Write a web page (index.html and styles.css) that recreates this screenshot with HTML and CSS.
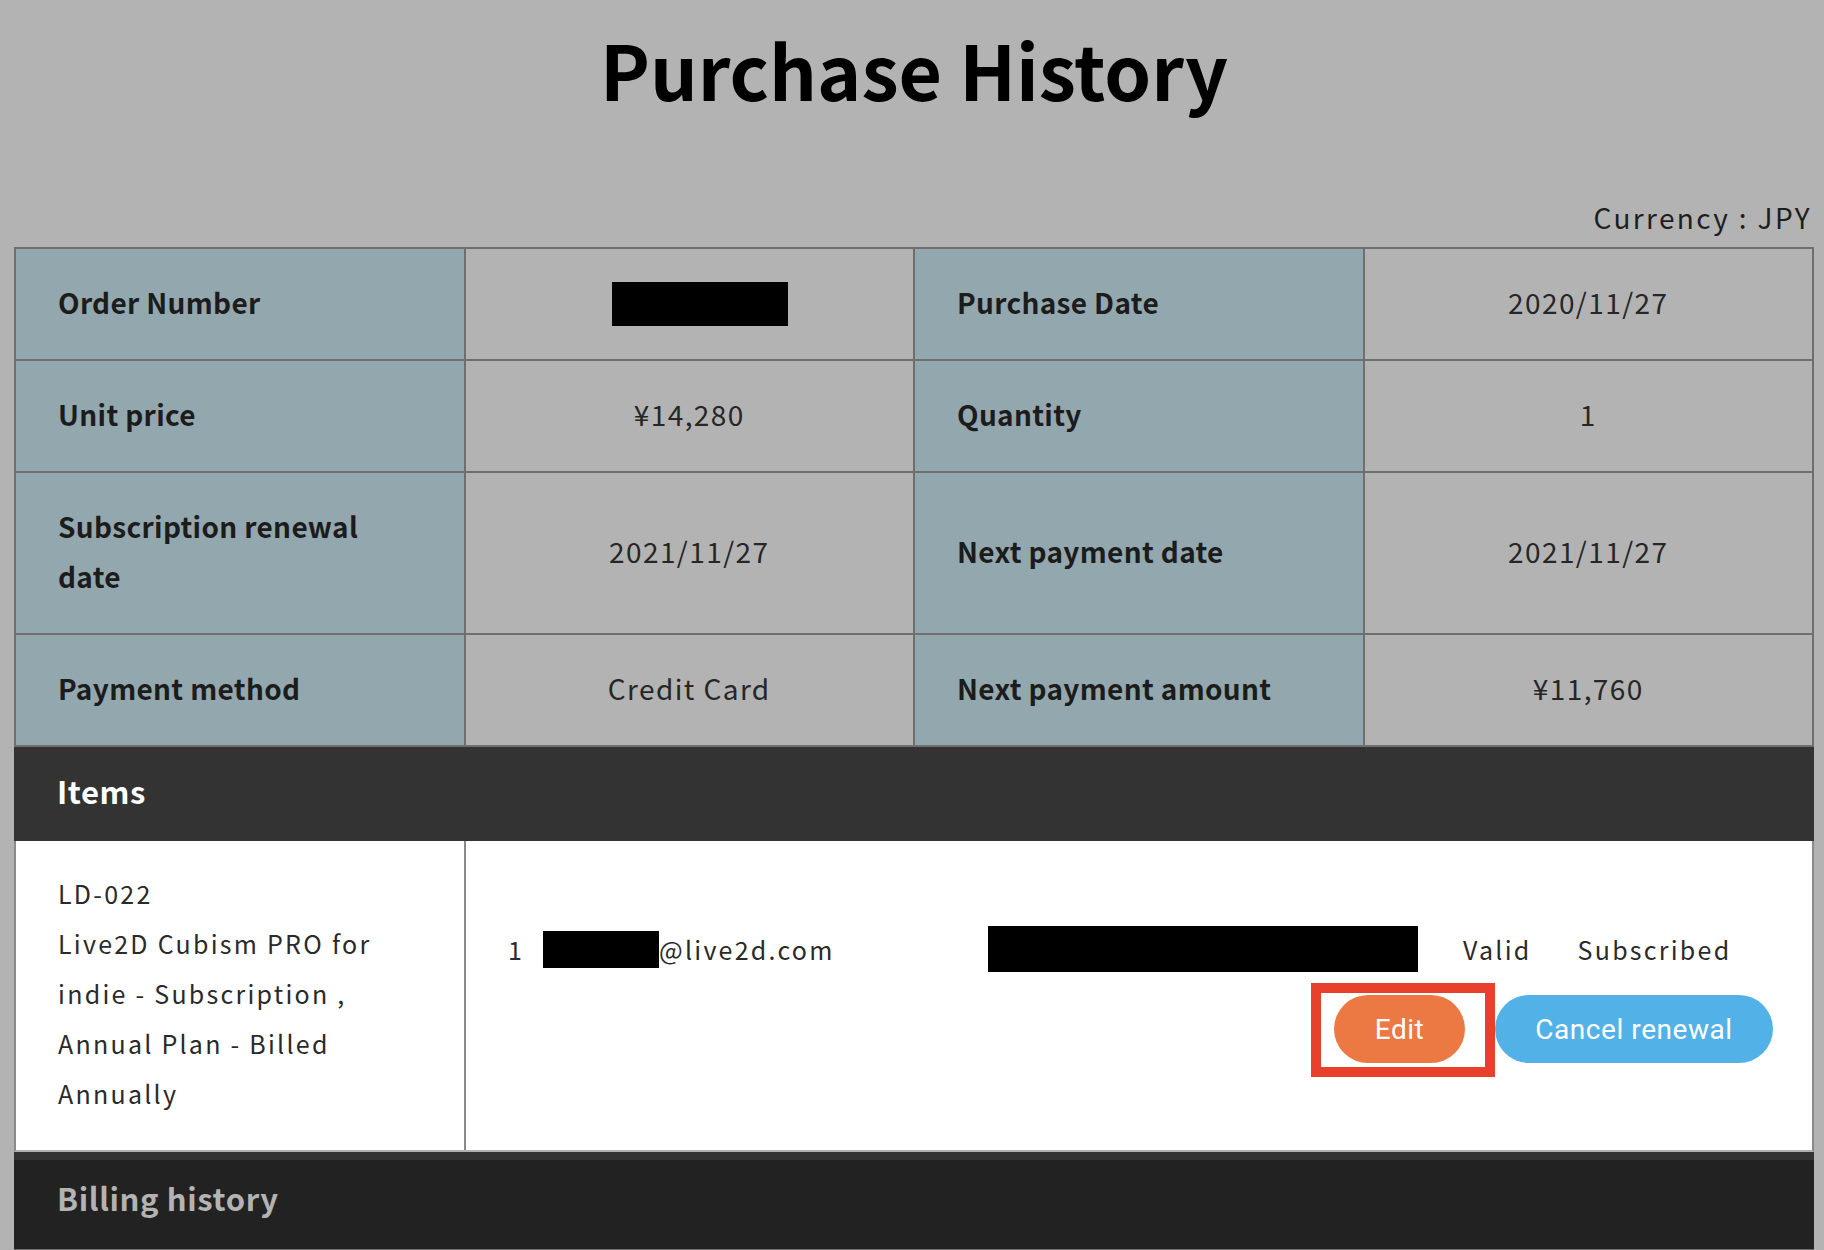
FILE: index.html
```html
<!DOCTYPE html>
<html lang="en">
<head>
<meta charset="utf-8">
<title>Purchase History</title>
<link rel="stylesheet" href="styles.css">
</head>
<body>
<main class="page">
  <h1 class="title">Purchase History</h1>
  <p class="currency">Currency : JPY</p>

  <div class="summary">
    <div class="cell label">Order Number</div>
    <div class="cell value"><span class="redact redact-order"></span></div>
    <div class="cell label">Purchase Date</div>
    <div class="cell value">2020/11/27</div>

    <div class="cell label">Unit price</div>
    <div class="cell value">¥14,280</div>
    <div class="cell label">Quantity</div>
    <div class="cell value">1</div>

    <div class="cell label">Subscription renewal date</div>
    <div class="cell value">2021/11/27</div>
    <div class="cell label">Next payment date</div>
    <div class="cell value">2021/11/27</div>

    <div class="cell label">Payment method</div>
    <div class="cell value">Credit Card</div>
    <div class="cell label">Next payment amount</div>
    <div class="cell value">¥11,760</div>
  </div>

  <section class="items">
    <h2 class="items-head">Items</h2>
    <div class="items-row">
      <div class="items-name">LD-022<br>Live2D Cubism PRO for indie - Subscription , Annual Plan - Billed Annually</div>
      <div class="items-detail">
        <div class="license">
          <span class="lic-no">1</span>
          <span class="lic-mail"><span class="redact redact-mail"></span>@live2d.com</span>
          <span class="redact redact-key"></span>
          <span class="lic-valid">Valid</span>
          <span class="lic-status">Subscribed</span>
        </div>
        <div class="actions">
          <span class="edit-wrap">
            <button class="btn btn-edit" type="button">Edit</button>
            <span class="highlight"></span>
          </span>
          <button class="btn btn-cancel" type="button">Cancel renewal</button>
        </div>
      </div>
    </div>
  </section>
  <div class="strip"></div>
  <h2 class="billing">Billing history</h2>
</main>
</body>
</html>
```
FILE: styles.css
```css
html, body {
  margin: 0;
  padding: 0;
  background: #b3b3b3;
}

body {
  font-family: "Noto Sans CJK JP", "Noto Sans", sans-serif;
  color: #1e1e1e;
  height: 1250px;
  overflow: hidden;
}

.page {
  padding: 0 10px 0 14px;
}

.title {
  margin: 0;
  padding-top: 30px;
  font-size: 75px;
  line-height: 78px;
  font-weight: 700;
  text-align: center;
  color: #000;
  letter-spacing: 0;
}

.currency {
  margin: 95px 2px 0 0;
  font-size: 28px;
  line-height: 28px;
  text-align: right;
  letter-spacing: 0.085em;
  color: #1e1e1e;
}

.summary {
  margin-top: 16px;
  display: grid;
  grid-template-columns: repeat(4, 1fr);
  gap: 2px;
  padding: 2px;
  background: #6f6f6f;
}

.cell {
  padding: 28px 40px 32px 42px;
  font-size: 28px;
  line-height: 50px;
  letter-spacing: 0.05em;
  display: flex;
  align-items: center;
}

.label {
  background: #93a7ae;
  font-weight: 700;
  color: #1c1c1c;
  letter-spacing: 0.012em;
}

.value {
  background: #b3b3b3;
  justify-content: center;
  padding-left: 30px;
  padding-right: 30px;
  color: #262626;
}

.redact {
  display: inline-block;
  background: #000;
}

.redact-order {
  width: 176px;
  height: 44px;
  margin-left: 22px;
  margin-top: 4px;
}

.items {
  background: #fff;
}

.items-head {
  margin: 0;
  background: #333;
  color: #fff;
  font-size: 31px;
  line-height: 88px;
  padding-bottom: 6px;
  font-weight: 700;
  padding-left: 43px;
  letter-spacing: 0.02em;
}

.items-row {
  display: grid;
  grid-template-columns: 450px 1fr;
  border-left: 2px solid #8a8a8a;
  border-right: 2px solid #8a8a8a;
  border-bottom: 2px solid #b0b0b0;
  min-height: 309px;
}

.items-name {
  border-right: 2px solid #8a8a8a;
  padding: 27px 38px 20px 42px;
  font-size: 25px;
  line-height: 50px;
  letter-spacing: 0.09em;
  color: #2a2a2a;
}

.items-detail {
  display: flex;
  flex-direction: column;
  justify-content: center;
  padding: 0 39px 0 42px;
}

.license {
  display: flex;
  align-items: center;
  font-size: 25px;
  letter-spacing: 0.09em;
  color: #2a2a2a;
  height: 46px;
  margin-top: -2px;
}

.lic-no {
  width: 35px;
}

.lic-mail {
  display: flex;
  align-items: center;
  width: 445px;
}

.redact-mail {
  width: 116px;
  height: 37px;
}

.redact-key {
  width: 430px;
  height: 46px;
}

.lic-valid {
  margin-left: 45px;
}

.lic-status {
  margin-left: 46px;
}

.actions {
  display: flex;
  justify-content: flex-end;
  gap: 30px;
  margin-top: 23px;
}

.edit-wrap {
  position: relative;
  display: inline-flex;
}

.btn {
  font-family: Roboto, "Noto Sans", sans-serif;
  font-size: 28px;
  color: #fff;
  border: 0;
  border-radius: 34px;
  height: 68px;
  padding: 0;
  letter-spacing: 0.02em;
}

.btn-edit {
  background: #ec7843;
  width: 131px;
}

.btn-cancel {
  background: #52b2e8;
  width: 278px;
}

.highlight {
  position: absolute;
  left: -23px;
  right: -30px;
  top: -12px;
  bottom: -14px;
  border: 10px solid #e8402a;
}

.strip {
  height: 8px;
  background: #333;
}

.billing {
  margin: 0;
  background: #222;
  color: #b3b3b3;
  font-size: 31px;
  line-height: 75px;
  padding-bottom: 14px;
  font-weight: 700;
  padding-left: 43px;
  letter-spacing: 0.02em;
  border-bottom: 2px solid #6f6f6f;
}
```
